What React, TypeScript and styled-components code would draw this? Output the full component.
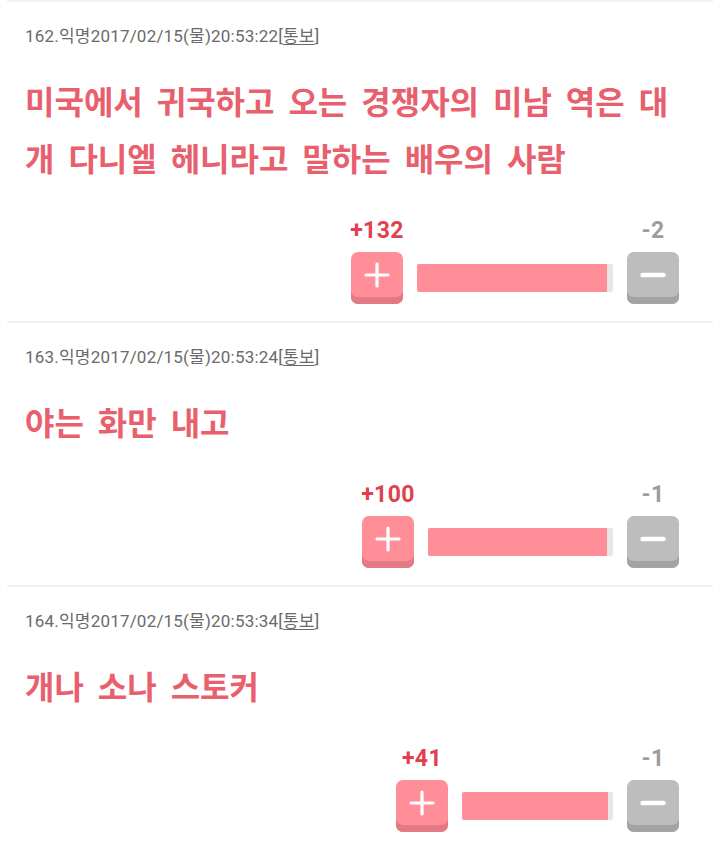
import React from "react";
import styled, { createGlobalStyle } from "styled-components";

const GlobalStyle = createGlobalStyle`
  html, body {
    margin: 0;
    padding: 0;
    background: #ffffff;
  }
  body {
    font-family: Roboto, "Noto Sans CJK KR", "Noto Sans", sans-serif;
    -webkit-font-smoothing: antialiased;
  }
`;

type Post = {
  no: number;
  author: string;
  date: string;
  title: string;
  up: number;
  down: number;
  barWidth: number;
};

const posts: Post[] = [
  {
    no: 162,
    author: "익명",
    date: "2017/02/15(물)20:53:22",
    title: "미국에서 귀국하고 오는 경쟁자의 미남 역은 대개 다니엘 헤니라고 말하는 배우의 사람",
    up: 132,
    down: 2,
    barWidth: 196,
  },
  {
    no: 163,
    author: "익명",
    date: "2017/02/15(물)20:53:24",
    title: "야는 화만 내고",
    up: 100,
    down: 1,
    barWidth: 185,
  },
  {
    no: 164,
    author: "익명",
    date: "2017/02/15(물)20:53:34",
    title: "개나 소나 스토커",
    up: 41,
    down: 1,
    barWidth: 151,
  },
];

const List = styled.div`
  display: flex;
  flex-direction: column;
`;

const Item = styled.article`
  margin: 0 7px;
  padding: 24px 34px 17px 18px;
  border-top: 2px solid #f1f1f1;
  display: flex;
  flex-direction: column;
`;

const Meta = styled.div`
  height: 20px;
  font-size: 17px;
  line-height: 20px;
  letter-spacing: 0.2px;
  color: #6a6a6a;
  white-space: nowrap;
`;

const Report = styled.span`
  text-decoration: underline;
  text-underline-offset: 2px;
`;

const Title = styled.h2`
  margin: 29px 0 0;
  font-size: 32px;
  line-height: 57px;
  font-weight: 700;
  word-spacing: 6px;
  color: #e8606d;
`;

const Votes = styled.div`
  margin-top: 30px;
  align-self: flex-end;
  display: grid;
  grid-template-columns: 52px auto 52px;
  column-gap: 14px;
  row-gap: 9px;
  align-items: center;
`;

const Count = styled.span<{ $tone: "up" | "down" }>`
  grid-row: 1;
  grid-column: ${(p) => (p.$tone === "up" ? 1 : 3)};
  justify-self: center;
  white-space: nowrap;
  font-size: 23px;
  line-height: 24px;
  letter-spacing: 0.4px;
  font-weight: 700;
  color: ${(p) => (p.$tone === "up" ? "#e2404e" : "#9c9c9c")};
`;

const VoteButton = styled.button<{ $tone: "up" | "down" }>`
  grid-row: 2;
  width: 52px;
  height: 52px;
  padding: 0 0 7px;
  border: none;
  border-radius: 7px;
  display: flex;
  align-items: center;
  justify-content: center;
  background: ${(p) => (p.$tone === "up" ? "#ff8e99" : "#bdbdbd")};
  box-shadow: inset 0 -7px 0 ${(p) => (p.$tone === "up" ? "#e27984" : "#a4a4a4")};
  cursor: pointer;
`;

const Bar = styled.div`
  grid-row: 2;
  height: 28px;
  border-radius: 2px;
  background: #e6e6e6;
  overflow: hidden;
  display: flex;
`;

const Fill = styled.div`
  height: 100%;
  background: #ff8e99;
`;

const PlusIcon = () => (
  <svg width="26" height="26" viewBox="0 0 26 26">
    <path d="M13 2v22M2 13h22" stroke="#ffffff" strokeWidth="3.2" strokeLinecap="round" />
  </svg>
);

const MinusIcon = () => (
  <svg width="26" height="26" viewBox="0 0 26 26">
    <path d="M2.5 13h21" stroke="#ffffff" strokeWidth="4.4" strokeLinecap="round" />
  </svg>
);

const VoteBox = ({ up, down, barWidth }: { up: number; down: number; barWidth: number }) => {
  const share = (up / (up + down)) * 100;
  return (
    <Votes>
      <Count $tone="up">+{up}</Count>
      <Count $tone="down">-{down}</Count>
      <VoteButton $tone="up" aria-label="추천">
        <PlusIcon />
      </VoteButton>
      <Bar style={{ width: barWidth }}>
        <Fill style={{ width: `${Math.min(share, 97)}%` }} />
      </Bar>
      <VoteButton $tone="down" aria-label="비추천">
        <MinusIcon />
      </VoteButton>
    </Votes>
  );
};

export default function App() {
  return (
    <>
      <GlobalStyle />
      <List>
        {posts.map((p) => (
          <Item key={p.no}>
            <Meta>
              {p.no}.{p.author}
              {p.date}[<Report>통보</Report>]
            </Meta>
            <Title>{p.title}</Title>
            <VoteBox up={p.up} down={p.down} barWidth={p.barWidth} />
          </Item>
        ))}
      </List>
    </>
  );
}
